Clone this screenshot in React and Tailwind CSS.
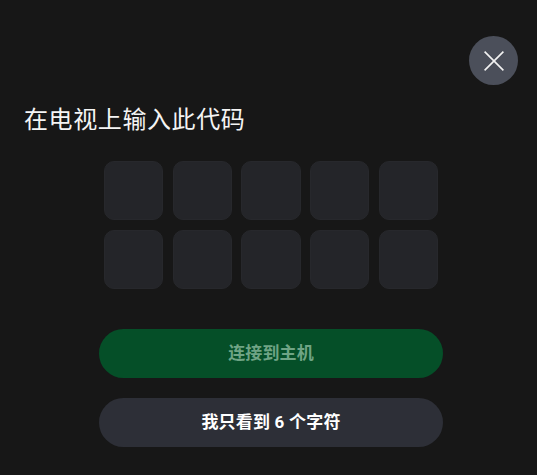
const FONT = "font-['Roboto','Noto_Sans_CJK_SC',sans-serif]";

function CodeRow() {
  return (
    <div className="flex gap-[9.5px]">
      {[0, 1, 2, 3, 4].map(i => (
        <div key={i} className="w-[59.3px] h-[59px] rounded-[10px] bg-[#242529] border border-[#27282c]"></div>
      ))}
    </div>
  );
}

export default function App() {
  return (
    <div className={`w-[537px] h-[475px] bg-[#171717] overflow-hidden flex flex-col ${FONT}`}>
      <div className="flex justify-end pt-[36px] pr-[19px]">
        <button className="w-[49px] h-[49px] rounded-full bg-[#4b4f5a] flex items-center justify-center">
          <svg width="20" height="20" viewBox="0 0 20 20" fill="none" stroke="#f2f2f2" strokeWidth="1.6">
            <path d="M0.6 0.6L19.4 19.4M19.4 0.6L0.6 19.4" />
          </svg>
        </button>
      </div>

      <h1 className="mt-[19px] ml-[24px] text-[24px] leading-[32px] tracking-[0.6px] font-normal text-[#f4f4f4]">在电视上输入此代码</h1>

      <div className="mt-[25px] ml-[103.75px] flex flex-col gap-[10px]">
        <CodeRow />
        <CodeRow />
      </div>

      <div className="mt-[39.5px] ml-[99px] w-[344px] flex flex-col gap-[20px]">
        <button className="h-[49px] pt-[1px] rounded-full bg-[#054f28] text-[#6fa485] text-[17px] tracking-[0.1px] font-bold">连接到主机</button>
        <button className="h-[49px] pt-[1px] rounded-full bg-[#2d2f37] text-white text-[17px] tracking-[0.2px] font-bold">我只看到 6 个字符</button>
      </div>
    </div>
  );
}
